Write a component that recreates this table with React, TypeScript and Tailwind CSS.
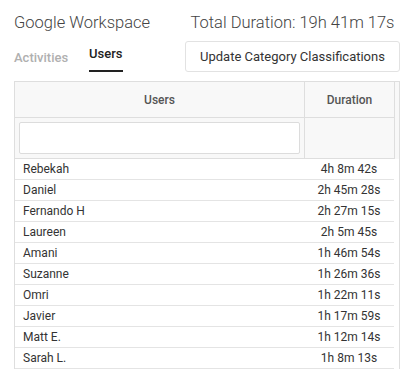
const users = [
  { name: "Rebekah", duration: "4h 8m 42s" },
  { name: "Daniel", duration: "2h 45m 28s" },
  { name: "Fernando H", duration: "2h 27m 15s" },
  { name: "Laureen", duration: "2h 5m 45s" },
  { name: "Amani", duration: "1h 46m 54s" },
  { name: "Suzanne", duration: "1h 26m 36s" },
  { name: "Omri", duration: "1h 22m 11s" },
  { name: "Javier", duration: "1h 17m 59s" },
  { name: "Matt E.", duration: "1h 12m 14s" },
  { name: "Sarah L.", duration: "1h 8m 13s" },
];

export default function App() {
  return (
    <div
      className="h-[369px] overflow-hidden bg-white pl-[14px] pr-[12px] pt-[10px] text-[#333]"
      style={{ fontFamily: "Roboto, 'Liberation Sans', sans-serif" }}
    >
      <div className="flex items-center justify-between">
        <h1 className="whitespace-nowrap text-[16.5px] font-light leading-[26px] text-[#444]">Google Workspace</h1>
        <div className="w-[215px] whitespace-nowrap text-center text-[16.5px] font-light leading-[26px] text-[#444]">
          Total Duration: 19h 41m 17s
        </div>
      </div>

      <div className="mt-[5px] flex items-start justify-between">
        <div className="flex gap-[21px] pt-[3px] text-[13px] font-medium">
          <button className="text-[#b0b0b0]">Activities</button>
          <button className="border-b-2 border-[#222] pb-[6px] text-[#222]">Users</button>
        </div>
        <button className="h-[31px] w-[215px] rounded-[3px] border border-[#e2e2e2] bg-white text-[13px] text-[#333]">
          Update Category Classifications
        </button>
      </div>

      <div className="mt-[9px] border border-[#dedede]">
        <div className="flex bg-[#f8f8f8] text-[12px] font-medium text-[#555]">
          <div className="flex-1">
            <div className="flex h-[36px] items-center justify-center border-b border-[#dedede]">Users</div>
            <div className="h-[41px] border-b border-[#dedede] px-[4px] pt-[4px]">
              <input className="h-[32px] w-full rounded-[2px] border border-[#dcdcdc] bg-white outline-none" />
            </div>
          </div>
          <div className="w-[90px] border-l border-[#dedede]">
            <div className="flex h-[36px] items-center justify-center border-b border-[#dedede]">Duration</div>
            <div className="h-[41px] border-b border-[#dedede]" />
          </div>
          <div className="w-[5px] border-l border-[#dedede]" />
        </div>

        <div className="pr-[5px]">
          {users.map((u) => (
            <div key={u.name} className="flex h-[21px] items-center border-b border-[#e4e4e4] text-[12px] text-[#333]">
              <div className="flex-1 pl-[8px]">{u.name}</div>
              <div className="w-[90px] text-center">{u.duration}</div>
            </div>
          ))}
        </div>
      </div>
    </div>
  );
}
